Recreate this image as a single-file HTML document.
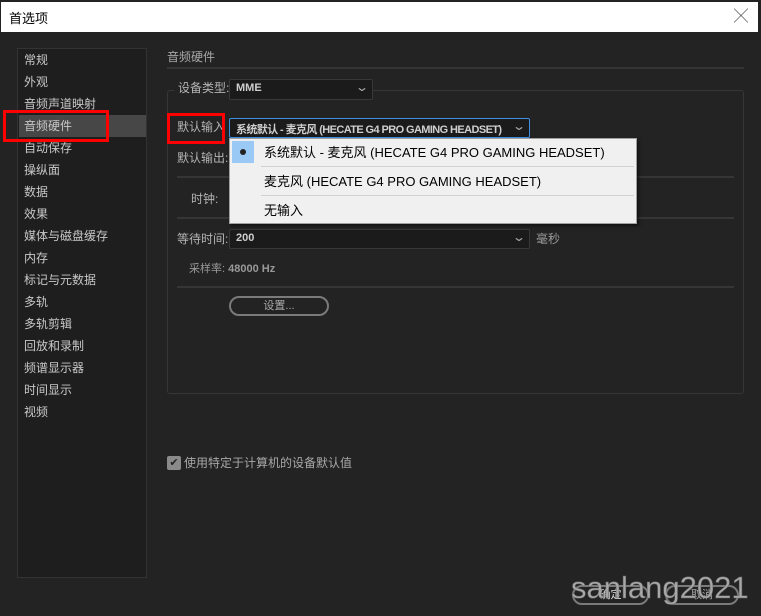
<!DOCTYPE html>
<html><head><meta charset="utf-8"><style>
*{margin:0;padding:0;box-sizing:border-box}
body{width:761px;height:616px;background:#232323;position:relative;overflow:hidden;font-family:"Liberation Sans","Noto Sans CJK SC",sans-serif;font-size:12px;color:#b4b4b4}
.a{position:absolute;white-space:nowrap}
.title{left:1px;top:2px;width:757px;height:30px;background:#fff;color:#000;font-size:13px;padding:6px 0 0 8px}
.side{left:17px;top:48px;width:130px;height:530px;background:#1e1e1e;border:1px solid #333}
.it{position:absolute;left:6px;color:#c8c8c8;font-size:12px}
.line{position:absolute;height:2px;background:#353535}
.dd{position:absolute;white-space:nowrap;overflow:hidden;background:#1b1b1b;border:1px solid #383838;border-radius:2px;color:#cfcfcf;font-size:11px;font-weight:bold;padding:2px 0 0 6px}
.chev{position:absolute;right:5px;top:0px;font-weight:normal;color:#aaa;font-size:12px;transform:scaleX(1.4);letter-spacing:0}
.red{position:absolute;border:3px solid #f00}
.pop{left:229px;top:138px;width:408px;height:86px;background:#f0f0f0;border:1px solid #a0a0a0;box-shadow:2px 2px 3px rgba(0,0,0,.5)}
.pi{position:absolute;left:34px;color:#000;font-size:13px}
.sep{position:absolute;left:31px;right:2px;height:1px;background:#d0d0d0}
.btn{position:absolute;border:2px solid #7a7a7a;border-radius:10px;color:#aaa;text-align:center;font-size:11px}
</style></head><body>
<div class="a title">首选项<span style="position:absolute;right:10px;top:4px;font-size:14px;color:#222">╳</span></div>
<div class="a side">
<div style="position:absolute;left:1px;top:66px;width:127px;height:22px;background:#474747"></div>
<div class="it" style="top:2px">常规</div>
<div class="it" style="top:24px">外观</div>
<div class="it" style="top:46px">音频声道映射</div>
<div class="it" style="top:68px">音频硬件</div>
<div class="it" style="top:90px">自动保存</div>
<div class="it" style="top:112px">操纵面</div>
<div class="it" style="top:134px">数据</div>
<div class="it" style="top:156px">效果</div>
<div class="it" style="top:178px">媒体与磁盘缓存</div>
<div class="it" style="top:200px">内存</div>
<div class="it" style="top:222px">标记与元数据</div>
<div class="it" style="top:244px">多轨</div>
<div class="it" style="top:266px">多轨剪辑</div>
<div class="it" style="top:288px">回放和录制</div>
<div class="it" style="top:310px">频谱显示器</div>
<div class="it" style="top:332px">时间显示</div>
<div class="it" style="top:354px">视频</div>
</div>
<div class="red" style="left:3px;top:110px;width:106px;height:32px"></div>
<div class="a" style="left:167px;top:48px;color:#a8a8a8">音频硬件</div>
<div class="line" style="left:167px;top:67px;width:577px"></div>
<div class="a" style="left:167px;top:90px;width:577px;height:304px;border:1px solid #363636;border-radius:3px"></div>
<div class="a" style="left:174px;top:79px;background:#232323;padding:0 4px;color:#b4b4b4">设备类型:</div>
<div class="dd" style="left:229px;top:79px;width:144px;height:21px">MME<span class="chev">⌄</span></div>
<div class="a" style="left:177px;top:118px">默认输入</div>
<div class="red" style="left:167px;top:113px;width:58px;height:31px"></div>
<div class="dd" style="left:229px;top:118px;width:301px;height:20px;border-color:#3d8fe0;letter-spacing:-0.6px">系统默认 - 麦克风 (HECATE G4 PRO GAMING HEADSET)<span class="chev">⌄</span></div>
<div class="a" style="left:177px;top:149px">默认输出:</div>
<div class="line" style="left:177px;top:176px;width:557px"></div>
<div class="a" style="left:191px;top:190px">时钟:</div>
<div class="line" style="left:177px;top:217px;width:557px"></div>
<div class="a" style="left:177px;top:230px">等待时间:</div>
<div class="dd" style="left:229px;top:229px;width:301px;height:20px">200<span class="chev">⌄</span></div>
<div class="a" style="left:536px;top:230px;color:#999">毫秒</div>
<div class="a" style="left:189px;top:260px;font-size:11px;color:#999">采样率: <b>48000 Hz</b></div>
<div class="line" style="left:177px;top:286px;width:557px"></div>
<div class="btn" style="left:229px;top:296px;width:100px;height:20px;line-height:16px">设置...</div>
<div class="a pop">
<div style="position:absolute;left:2px;top:2px;width:22px;height:22px;background:#99c9f4"></div>
<div style="position:absolute;left:10px;top:10px;width:6px;height:6px;border-radius:50%;background:#222"></div>
<div class="pi" style="top:3px">系统默认 - 麦克风 (HECATE G4 PRO GAMING HEADSET)</div>
<div class="sep" style="top:27px"></div>
<div class="pi" style="top:32px">麦克风 (HECATE G4 PRO GAMING HEADSET)</div>
<div class="sep" style="top:56px"></div>
<div class="pi" style="top:61px">无输入</div>
</div>
<div class="a" style="left:167px;top:456px;width:14px;height:14px;background:#8a8a8a;border-radius:2px;color:#222;font-size:11px;line-height:14px;text-align:center">✔</div>
<div class="a" style="left:184px;top:454px;color:#a8a8a8">使用特定于计算机的设备默认值</div>
<div class="btn" style="left:572px;top:585px;width:77px;height:20px;line-height:16px;color:#ddd">确定</div>
<div class="btn" style="left:665px;top:585px;width:74px;height:20px;line-height:16px">取消</div>
<div class="a" style="left:571px;top:570px;font-size:31px;color:#a8a8a8;-webkit-text-stroke:0.5px #666">sanlang2021</div>
</body></html>
